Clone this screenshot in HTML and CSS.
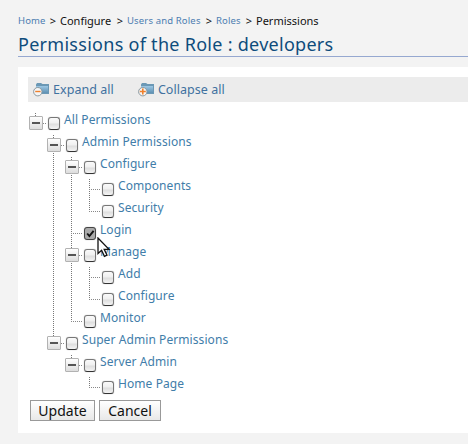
FILE: index.html
```html
<!DOCTYPE html>
<html lang="en">
<head>
<meta charset="utf-8">
<title>Permissions of the Role</title>
<link rel="stylesheet" href="styles.css">
</head>
<body>
<nav class="crumbs"><a class="home">Home</a><i>&gt;</i><span class="c-conf">Configure</span><i>&gt;</i><a class="c-users">Users and Roles</a><i>&gt;</i><a class="c-roles">Roles</a><i>&gt;</i><span class="c-perm">Permissions</span></nav>
<h1><span>Permissions of the Role : developers</span></h1>
<main class="panel">
  <div class="toolbar">
    <a class="tool"><svg width="18" height="16" viewBox="0 0 18 16"><defs><linearGradient id="f" x1="0" y1="0" x2="0" y2="1"><stop offset="0" stop-color="#9cc7e4"/><stop offset="1" stop-color="#5f91b3"/></linearGradient></defs><path d="M3 2.5L4 1H8l1.5 1H16V12H3z" fill="#6b98b5"/><path d="M3 4h12v7H3z" fill="url(#f)"/><circle cx="4.8" cy="9.7" r="4.2" fill="#f5f5f5" stroke="#8a989f"/><path d="M2.2 9.5h5.4" stroke="#ef802c" stroke-width="1.4"/></svg><span>Expand all</span></a>
    <a class="tool"><svg width="18" height="16" viewBox="0 0 18 16"><path d="M3 2.5L4 1H8l1.5 1H16V12H3z" fill="#6b98b5"/><path d="M3 4h12v7H3z" fill="url(#f)"/><circle cx="4.8" cy="9.7" r="4.2" fill="#f5f5f5" stroke="#8a989f"/><path d="M1.8 9.5h6M4.8 6.5v6" stroke="#ef802c" stroke-width="1.6"/></svg><span>Collapse all</span></a>
  </div>
  <ul class="tree">
    <li><div class="row"><b class="toggle"></b><b class="check"></b><span>All Permissions</span></div>
      <ul>
        <li><div class="row"><b class="toggle"></b><b class="check"></b><span>Admin Permissions</span></div>
          <ul>
            <li><div class="row"><b class="toggle"></b><b class="check"></b><span>Configure</span></div>
              <ul>
                <li><div class="row leaf"><b class="check"></b><span>Components</span></div></li>
                <li><div class="row leaf"><b class="check"></b><span>Security</span></div></li>
              </ul>
            </li>
            <li><div class="row leaf"><b class="check checked"><svg width="13" height="13" viewBox="0 0 13 13"><path d="M3.2 6.5l2.2 2.6L9.6 3.8" fill="none" stroke="#111" stroke-width="1.9"/></svg></b><span>Login</span>
              <svg class="cursor" width="14" height="22" viewBox="0 0 14 22"><path d="M1 1v15.5l3.6-3.2 2.8 6 2.6-1.2-2.8-5.8h4.8z" fill="#fff" stroke="#111" stroke-width="1.3"/></svg></div></li>
            <li><div class="row"><b class="toggle"></b><b class="check"></b><span>Manage</span></div>
              <ul>
                <li><div class="row leaf"><b class="check"></b><span>Add</span></div></li>
                <li><div class="row leaf"><b class="check"></b><span>Configure</span></div></li>
              </ul>
            </li>
            <li><div class="row leaf"><b class="check"></b><span>Monitor</span></div></li>
          </ul>
        </li>
        <li><div class="row"><b class="toggle"></b><b class="check"></b><span>Super Admin Permissions</span></div>
          <ul>
            <li><div class="row"><b class="toggle"></b><b class="check"></b><span>Server Admin</span></div>
              <ul>
                <li><div class="row leaf"><b class="check"></b><span>Home Page</span></div></li>
              </ul>
            </li>
          </ul>
        </li>
      </ul>
    </li>
  </ul>
  <div class="actions"><button class="update">Update</button><button class="cancel">Cancel</button></div>
</main>
</body>
</html>
```
FILE: styles.css
```css
* { box-sizing: border-box; }
body { margin: 0; padding-left: 18px; height: 444px; overflow: hidden; background: #f3f3f3; font-family: "Noto Sans", "Open Sans", sans-serif; }
.crumbs { display: flex; align-items: center; height: 14px; margin-top: 14px; font-size: 11px; line-height: 14px; color: #111; white-space: nowrap; }
.crumbs a { color: #4c7db1; font-size: 9.5px; letter-spacing: 0.15px; }
.crumbs i { font-style: normal; width: 14px; text-align: center; flex: none; }
.home { width: 28px; }
.c-conf { width: 52px; margin-right: 1px; }
.c-users { width: 75px; }
.c-roles { width: 26px; }
h1 { margin: 4px 0 0; height: 25px; border-bottom: 1px solid #96a8d0; color: #0e4c7c; font-size: 18px; font-weight: 400; letter-spacing: 0.28px; line-height: 24px; white-space: nowrap; }
.panel { margin-top: 10px; height: 366px; padding: 10px 0 0 10px; background: #fff; }
.toolbar { display: flex; gap: 24px; align-items: center; height: 25px; padding-left: 5px; background: #ececec; }
.tool { display: flex; align-items: center; height: 25px; color: #40719f; font-size: 12.5px; letter-spacing: 0.05px; line-height: 24px; white-space: nowrap; }
.tool svg { margin-right: 2px; }
ul { list-style: none; margin: 0; padding: 0 0 0 18px; }
.tree { padding: 0; margin: 7px 0 0 1px; color: #417da9; font-size: 12px; letter-spacing: 0.08px; }
li { background: repeating-linear-gradient(to bottom, #777 0 1px, transparent 1px 2px) 6px 0 / 1px 100% no-repeat; }
li:first-child { background-position: 6px 4px; }
li:last-child { background-size: 1px 15px; }
li:first-child:last-child { background-size: 1px 11px; }
.row { position: relative; display: flex; height: 22px; line-height: 22px; padding-left: 19px; white-space: nowrap; background: repeating-linear-gradient(to right, #888 0 1px, transparent 1px 2px) 6px 14px / 12px 1px no-repeat; }
.toggle { width: 14px; height: 14px; margin: 7px 5px 0 -19px; flex: none; border: 1px solid #b2b2b2; border-radius: 1px; background: linear-gradient(#555, #555) center / 8px 2px no-repeat, linear-gradient(#fff, #ddd); }
.check { width: 12px; height: 13px; margin: 8px 4px 0 0; flex: none; border: 1px solid #777; border-bottom-color: #333; border-radius: 3px; box-shadow: 0 0 1px #999; background: linear-gradient(#fafafa, #f0f0f0 45%, #dedede 55%, #f4f4f4); }
.checked { background: #aaa; border-color: #444; }
.checked svg { display: block; margin: -1px; }
.cursor { position: absolute; left: 32px; top: 18px; z-index: 2; }
.actions { display: flex; gap: 4px; margin: 5px 0 0 2px; }
button { height: 21px; padding: 0; border: 1px solid #999; border-radius: 0; background: linear-gradient(#fff, #e8e8e8); color: #111; font: 14px/18px "Noto Sans", sans-serif; }
.update { width: 65px; }
.cancel { width: 62px; }
```
